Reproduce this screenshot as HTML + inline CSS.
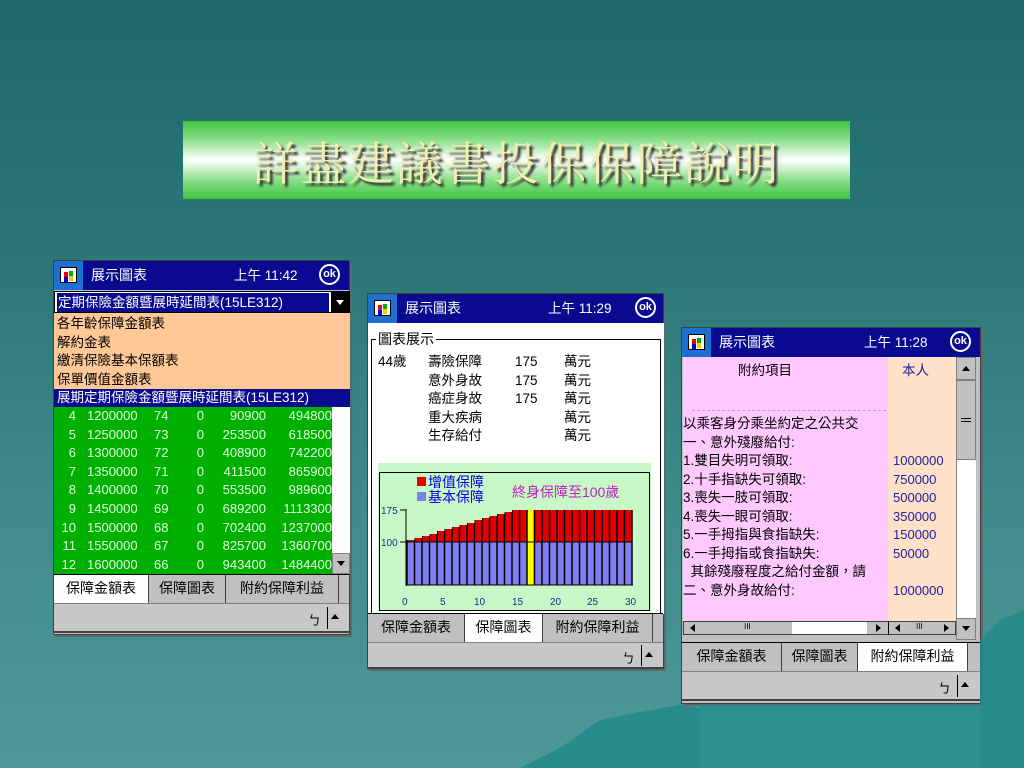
<!DOCTYPE html>
<html><head><meta charset="utf-8"><style>
*{margin:0;padding:0;box-sizing:border-box}
body{width:1024px;height:768px;overflow:hidden;position:relative;font-family:"Liberation Sans","Noto Sans CJK TC",sans-serif;background:linear-gradient(180deg,#1d6868 0%,#2c7878 35%,#3f8a8a 65%,#4f9898 100%)}
.a{position:absolute;white-space:nowrap}
.scr{position:absolute;background:#c0c0c0;border:1px solid #404040;box-shadow:2px 2px 0 #5a6a6a}
.tb{position:absolute;left:0;right:0;top:0;height:29px;background:#0a0a90;color:#fff;font-size:14px;line-height:18px}
.logo{position:absolute;left:0;top:0;width:29px;height:29px;background:#1d6fd0}
.logo i{position:absolute;left:6px;top:6px;width:17px;height:16px;background:#fff;border:1px solid #000}
.logo b{position:absolute;width:4px;height:5px}
.ok{position:absolute;width:21px;height:21px;border:2px solid #fff;border-radius:50%;font-size:11px;font-weight:bold;text-align:center;line-height:17px;color:#fff}
.tabs{position:absolute;left:0;right:0;height:29px;font-size:14px;border-top:1px solid #000}
.tab{position:absolute;top:0;height:28px;border-right:1px solid #404040;text-align:center;line-height:26px;background:#c0c0c0}
.tab.on{background:#fff}
.bot{position:absolute;left:0;right:0;border-top:1px solid #808080;border-bottom:2px solid #404040;background:#c8c8c8;font-size:13px}
.gr div{position:absolute;height:18px;line-height:18px;font-size:13px;color:#e0ffe0;text-align:right}
</style></head><body>

<div class="a" style="left:183px;top:121px;width:667px;height:78px;background:linear-gradient(180deg,#3cc43c 0%,#8ee08e 25%,#ffffff 50%,#8ee08e 75%,#3cc43c 100%)"></div>
<div class="a" style="left:183px;top:131px;width:667px;text-align:center;font-family:'Noto Serif CJK TC','Noto Serif CJK SC','Liberation Serif',serif;font-size:46px;color:#f2eeb0;letter-spacing:2px;text-shadow:3px 3px 2px #333;line-height:60px">詳盡建議書投保保障說明</div>

<!-- Screen 1 -->
<div class="scr" style="left:53px;top:260px;width:297px;height:375px">
  <div class="tb"><div class="logo"><i><b style="left:3px;top:4px;background:#e00"></b><b style="left:8px;top:3px;background:#0a0"></b><b style="left:3px;top:9px;background:#00c"></b><b style="left:8px;top:8px;background:#ec0"></b></i></div>
    <div class="a" style="left:37px;top:5px">展示圖表</div>
    <div class="a" style="left:180px;top:6px;font-size:13.5px">上午 11:42</div>
    <div class="ok" style="left:265px;top:3px">ok</div></div>
  <div class="a" style="left:0;top:30px;width:296px;height:22px;background:#fff;border:1px solid #000"></div>
  <div class="a" style="left:3px;top:32px;width:272px;height:19px;background:#0a0a90;color:#fff;font-size:13.5px;line-height:19px;padding-left:1px">定期保險金額暨展時延間表(15LE312)</div>
  <div class="a" style="left:277px;top:31px;width:19px;height:20px;background:#000"></div>
  <div class="a" style="left:282px;top:39px;border-left:4px solid transparent;border-right:4px solid transparent;border-top:5px solid #fff"></div>
  <div class="a" style="left:0;top:52px;width:296px;height:77px;background:#ffc896;font-size:13.5px;line-height:18.5px;padding:2px 0 0 3px">各年齡保障金額表<br>解約金表<br>繳清保險基本保額表<br>保單價值金額表</div>
  <div class="a" style="left:0;top:128px;width:296px;height:18px;background:#0a0a90;color:#fff;font-size:13.5px;line-height:18px;padding-left:3px;overflow:hidden">展期定期保險金額暨展時延間表(15LE312)</div>
  <div class="a gr" style="left:0;top:146px;width:278px;height:167px;background:#00b000;overflow:hidden">
    <div style="left:0;top:0;width:22px">4</div><div style="left:33px;top:0;width:55px;text-align:left">1200000</div><div style="left:100px;top:0;width:25px;text-align:left">74</div><div style="left:140px;top:0;width:10px">0</div><div style="left:160px;top:0;width:52px">90900</div><div style="left:215px;top:0;width:63px">494800</div>
    <div style="left:0;top:18.6px;width:22px">5</div><div style="left:33px;top:18.6px;width:55px;text-align:left">1250000</div><div style="left:100px;top:18.6px;width:25px;text-align:left">73</div><div style="left:140px;top:18.6px;width:10px">0</div><div style="left:160px;top:18.6px;width:52px">253500</div><div style="left:215px;top:18.6px;width:63px">618500</div>
    <div style="left:0;top:37.2px;width:22px">6</div><div style="left:33px;top:37.2px;width:55px;text-align:left">1300000</div><div style="left:100px;top:37.2px;width:25px;text-align:left">72</div><div style="left:140px;top:37.2px;width:10px">0</div><div style="left:160px;top:37.2px;width:52px">408900</div><div style="left:215px;top:37.2px;width:63px">742200</div>
    <div style="left:0;top:55.8px;width:22px">7</div><div style="left:33px;top:55.8px;width:55px;text-align:left">1350000</div><div style="left:100px;top:55.8px;width:25px;text-align:left">71</div><div style="left:140px;top:55.8px;width:10px">0</div><div style="left:160px;top:55.8px;width:52px">411500</div><div style="left:215px;top:55.8px;width:63px">865900</div>
    <div style="left:0;top:74.4px;width:22px">8</div><div style="left:33px;top:74.4px;width:55px;text-align:left">1400000</div><div style="left:100px;top:74.4px;width:25px;text-align:left">70</div><div style="left:140px;top:74.4px;width:10px">0</div><div style="left:160px;top:74.4px;width:52px">553500</div><div style="left:215px;top:74.4px;width:63px">989600</div>
    <div style="left:0;top:93px;width:22px">9</div><div style="left:33px;top:93px;width:55px;text-align:left">1450000</div><div style="left:100px;top:93px;width:25px;text-align:left">69</div><div style="left:140px;top:93px;width:10px">0</div><div style="left:160px;top:93px;width:52px">689200</div><div style="left:215px;top:93px;width:63px">1113300</div>
    <div style="left:0;top:111.6px;width:22px">10</div><div style="left:33px;top:111.6px;width:55px;text-align:left">1500000</div><div style="left:100px;top:111.6px;width:25px;text-align:left">68</div><div style="left:140px;top:111.6px;width:10px">0</div><div style="left:160px;top:111.6px;width:52px">702400</div><div style="left:215px;top:111.6px;width:63px">1237000</div>
    <div style="left:0;top:130.2px;width:22px">11</div><div style="left:33px;top:130.2px;width:55px;text-align:left">1550000</div><div style="left:100px;top:130.2px;width:25px;text-align:left">67</div><div style="left:140px;top:130.2px;width:10px">0</div><div style="left:160px;top:130.2px;width:52px">825700</div><div style="left:215px;top:130.2px;width:63px">1360700</div>
    <div style="left:0;top:148.8px;width:22px">12</div><div style="left:33px;top:148.8px;width:55px;text-align:left">1600000</div><div style="left:100px;top:148.8px;width:25px;text-align:left">66</div><div style="left:140px;top:148.8px;width:10px">0</div><div style="left:160px;top:148.8px;width:52px">943400</div><div style="left:215px;top:148.8px;width:63px">1484400</div>
  </div>
  <div class="a" style="left:278px;top:146px;width:18px;height:167px;background:#fff"></div>
  <div class="a" style="left:278px;top:292px;width:18px;height:21px;background:#c0c0c0;border:1px solid #808080"></div>
  <div class="a" style="left:283px;top:300px;border-left:4px solid transparent;border-right:4px solid transparent;border-top:5px solid #000"></div>
  <div class="tabs" style="top:313px">
    <div class="tab on" style="left:0;width:95px">保障金額表</div>
    <div class="tab" style="left:95px;width:77px">保障圖表</div>
    <div class="tab" style="left:172px;width:113px">附約保障利益</div>
  </div>
  <div class="bot" style="top:342px;height:30px"><div class="a" style="left:254px;top:6px">ㄅ</div><div class="a" style="left:273px;top:3px;width:1px;height:22px;background:#000"></div><div class="a" style="left:277px;top:10px;border-left:4px solid transparent;border-right:4px solid transparent;border-bottom:5px solid #000"></div></div>
</div>

<!-- Screen 2 -->
<div class="scr" style="left:367px;top:293px;width:297px;height:376px">
  <div class="tb"><div class="logo"><i><b style="left:3px;top:4px;background:#e00"></b><b style="left:8px;top:3px;background:#0a0"></b><b style="left:3px;top:9px;background:#00c"></b><b style="left:8px;top:8px;background:#ec0"></b></i></div>
    <div class="a" style="left:37px;top:5px">展示圖表</div>
    <div class="a" style="left:180px;top:6px;font-size:13.5px">上午 11:29</div>
    <div class="ok" style="left:267px;top:3px">ok</div></div>
  <div class="a" style="left:0;top:29px;width:296px;height:291px;background:#fff"></div>
  <div class="a" style="left:3px;top:45px;width:290px;height:274px;border:1px solid #000;border-bottom:none"></div>
  <div class="a" style="left:8px;top:35px;background:#fff;font-size:14px;padding:0 2px">圖表展示</div>
  <div class="a" style="left:10px;top:59px;font-size:13.5px;line-height:18.5px">44歲</div>
  <div class="a" style="left:60px;top:59px;font-size:13.5px;line-height:18.5px">壽險保障<br>意外身故<br>癌症身故<br>重大疾病<br>生存給付</div>
  <div class="a" style="left:147px;top:59px;font-size:13.5px;line-height:18.5px">175<br>175<br>175</div>
  <div class="a" style="left:196px;top:59px;font-size:13.5px;line-height:18.5px">萬元<br>萬元<br>萬元<br>萬元<br>萬元</div>
  <div class="tabs" style="top:319px">
    <div class="tab" style="left:0;width:97px">保障金額表</div>
    <div class="tab on" style="left:97px;width:78px">保障圖表</div>
    <div class="tab" style="left:175px;width:110px">附約保障利益</div>
  </div>
  <div class="bot" style="top:348px;height:27px"><div class="a" style="left:254px;top:5px">ㄅ</div><div class="a" style="left:273px;top:2px;width:1px;height:21px;background:#000"></div><div class="a" style="left:277px;top:9px;border-left:4px solid transparent;border-right:4px solid transparent;border-bottom:5px solid #000"></div></div>
</div>
<svg class="a" style="left:0;top:0" width="1024" height="768">
  <rect x="378" y="463" width="273" height="148" fill="#c8f8c8"/>
  <rect x="379.5" y="472.5" width="270" height="138" fill="none" stroke="#000" stroke-width="1"/>
  <rect x="417" y="477" width="9" height="9" fill="#e00000"/>
  <rect x="417" y="492" width="9" height="9" fill="#8080f0"/>
  <text x="428" y="487" font-size="14" fill="#0000e0" font-family="Liberation Sans,Noto Sans CJK TC,sans-serif">增值保障</text>
  <text x="428" y="502" font-size="14" fill="#0000e0" font-family="Liberation Sans,Noto Sans CJK TC,sans-serif">基本保障</text>
  <text x="512" y="497" font-size="14" fill="#c020c0" font-family="Liberation Sans,Noto Sans CJK TC,sans-serif">終身保障至100歲</text>
  <rect x="407" y="542" width="225" height="43" fill="#8080f0"/>
  <rect x="407" y="510" width="225" height="32" fill="#e00000"/>
  <g stroke="#000" stroke-width="1.5">
    <line x1="407" y1="510" x2="407" y2="585"/><line x1="414.5" y1="510" x2="414.5" y2="585"/><line x1="422" y1="510" x2="422" y2="585"/><line x1="429.5" y1="510" x2="429.5" y2="585"/><line x1="437" y1="510" x2="437" y2="585"/><line x1="444.5" y1="510" x2="444.5" y2="585"/><line x1="452" y1="510" x2="452" y2="585"/><line x1="459.5" y1="510" x2="459.5" y2="585"/><line x1="467" y1="510" x2="467" y2="585"/><line x1="474.5" y1="510" x2="474.5" y2="585"/><line x1="482" y1="510" x2="482" y2="585"/><line x1="489.5" y1="510" x2="489.5" y2="585"/><line x1="497" y1="510" x2="497" y2="585"/><line x1="504.5" y1="510" x2="504.5" y2="585"/><line x1="512" y1="510" x2="512" y2="585"/><line x1="519.5" y1="510" x2="519.5" y2="585"/><line x1="527" y1="510" x2="527" y2="585"/><line x1="534.5" y1="510" x2="534.5" y2="585"/><line x1="542" y1="510" x2="542" y2="585"/><line x1="549.5" y1="510" x2="549.5" y2="585"/><line x1="557" y1="510" x2="557" y2="585"/><line x1="564.5" y1="510" x2="564.5" y2="585"/><line x1="572" y1="510" x2="572" y2="585"/><line x1="579.5" y1="510" x2="579.5" y2="585"/><line x1="587" y1="510" x2="587" y2="585"/><line x1="594.5" y1="510" x2="594.5" y2="585"/><line x1="602" y1="510" x2="602" y2="585"/><line x1="609.5" y1="510" x2="609.5" y2="585"/><line x1="617" y1="510" x2="617" y2="585"/><line x1="624.5" y1="510" x2="624.5" y2="585"/><line x1="632" y1="510" x2="632" y2="585"/>
  </g>
  <rect x="527.8" y="510" width="5.8" height="75" fill="#ffff00"/>
  <polygon points="406,509 406,540 414.5,540 414.5,538 422,538 422,536 429.5,536 429.5,534 437,534 437,531 444.5,531 444.5,529 452,529 452,527 459.5,527 459.5,525 467,525 467,523 474.5,523 474.5,520 482,520 482,518 489.5,518 489.5,516 497,516 497,514 504.5,514 504.5,512 512,512 512,509" fill="#c8f8c8"/>
  <line x1="406" y1="509" x2="406" y2="586" stroke="#000"/>
  <line x1="400" y1="510" x2="406" y2="510" stroke="#000"/>
  <line x1="400" y1="542" x2="632" y2="542" stroke="#000"/>
  <line x1="406" y1="585" x2="633" y2="585" stroke="#000"/>
  <g font-size="10" fill="#103080" font-family="Liberation Sans,sans-serif">
    <text x="381" y="514">175</text><text x="381" y="546">100</text>
    <text x="402" y="605">0</text><text x="440" y="605">5</text><text x="474" y="605">10</text><text x="512" y="605">15</text><text x="550" y="605">20</text><text x="587" y="605">25</text><text x="625" y="605">30</text>
  </g>
</svg>

<!-- Screen 3 -->
<div class="scr" style="left:681px;top:327px;width:300px;height:377px">
  <div class="tb"><div class="logo"><i><b style="left:3px;top:4px;background:#e00"></b><b style="left:8px;top:3px;background:#0a0"></b><b style="left:3px;top:9px;background:#00c"></b><b style="left:8px;top:8px;background:#ec0"></b></i></div>
    <div class="a" style="left:37px;top:5px">展示圖表</div>
    <div class="a" style="left:182px;top:6px;font-size:13.5px">上午 11:28</div>
    <div class="ok" style="left:268px;top:3px">ok</div></div>
  <div class="a" style="left:1px;top:29px;width:205px;height:264px;background:#ffc8ff"></div>
  <div class="a" style="left:206px;top:29px;width:68px;height:264px;background:#ffe0c8"></div>
  <div class="a" style="left:56px;top:31px;font-size:13.5px">附約項目</div>
  <div class="a" style="left:220px;top:31px;font-size:13.5px;color:#2020a0">本人</div>
  <div class="a" style="left:10px;top:82px;width:194px;border-top:1px dashed #c0a0d0"></div>
  <div class="a" style="left:1px;top:87px;width:205px;font-size:13.5px;line-height:18.5px;overflow:hidden">以乘客身分乘坐約定之公共交<br>一、意外殘廢給付:<br>1.雙目失明可領取:<br>2.十手指缺失可領取:<br>3.喪失一肢可領取:<br>4.喪失一眼可領取:<br>5.一手拇指與食指缺失:<br>6.一手拇指或食指缺失:<br>&nbsp;&nbsp;其餘殘廢程度之給付金額，請<br>二、意外身故給付:</div>
  <div class="a" style="left:211px;top:124px;font-size:13px;line-height:18.5px;color:#2020a0">1000000<br>750000<br>500000<br>350000<br>150000<br>50000<br><br>1000000</div>
  <div class="a" style="left:274px;top:29px;width:20px;height:264px;background:#fff;border-left:1px solid #808080"></div>
  <div class="a" style="left:274px;top:29px;width:20px;height:23px;background:#c0c0c0;border:1px solid #808080"></div>
  <div class="a" style="left:280px;top:38px;border-left:4px solid transparent;border-right:4px solid transparent;border-bottom:5px solid #000"></div>
  <div class="a" style="left:274px;top:52px;width:20px;height:80px;background:#c0c0c0;border:1px solid #808080"></div>
  <div class="a" style="left:279px;top:90px;width:10px;height:4px;border-top:1px solid #000;border-bottom:1px solid #000"></div>
  <div class="a" style="left:274px;top:290px;width:20px;height:22px;background:#c0c0c0;border:1px solid #808080"></div>
  <div class="a" style="left:280px;top:298px;border-left:4px solid transparent;border-right:4px solid transparent;border-top:5px solid #000"></div>
  <div class="a" style="left:1px;top:293px;width:273px;height:14px;background:#c0c0c0;border:1px solid #404040"></div>
  <div class="a" style="left:110px;top:294px;width:75px;height:12px;background:#fff"></div>
  <div class="a" style="left:8px;top:296px;border-top:4px solid transparent;border-bottom:4px solid transparent;border-right:5px solid #000"></div>
  <div class="a" style="left:62px;top:294px;font-size:8px">III</div>
  <div class="a" style="left:194px;top:296px;border-top:4px solid transparent;border-bottom:4px solid transparent;border-left:5px solid #000"></div>
  <div class="a" style="left:206px;top:293px;width:1px;height:14px;background:#000"></div>
  <div class="a" style="left:213px;top:296px;border-top:4px solid transparent;border-bottom:4px solid transparent;border-right:5px solid #000"></div>
  <div class="a" style="left:234px;top:294px;font-size:8px">III</div>
  <div class="a" style="left:262px;top:296px;border-top:4px solid transparent;border-bottom:4px solid transparent;border-left:5px solid #000"></div>
  <div class="tabs" style="top:314px">
    <div class="tab" style="left:0;width:100px">保障金額表</div>
    <div class="tab" style="left:100px;width:76px">保障圖表</div>
    <div class="tab on" style="left:176px;width:110px">附約保障利益</div>
  </div>
  <div class="bot" style="top:343px;height:30px"><div class="a" style="left:256px;top:6px">ㄅ</div><div class="a" style="left:275px;top:3px;width:1px;height:22px;background:#000"></div><div class="a" style="left:279px;top:10px;border-left:4px solid transparent;border-right:4px solid transparent;border-bottom:5px solid #000"></div></div>
</div>

<svg class="a" style="left:0;top:0" width="1024" height="768">
  <path d="M520,768 L560,748 L600,720 L640,712 L680,705 L700,708 L700,768 Z" fill="#1f8a8a" opacity=".8"/>
  <path d="M980,640 L1000,620 L1024,610 L1024,768 L980,768 Z" fill="#1f8a8a" opacity=".8"/>
  <path d="M700,768 L700,705 L980,705 L980,768 Z" fill="#229090" opacity=".7"/>
</svg>
</body></html>
